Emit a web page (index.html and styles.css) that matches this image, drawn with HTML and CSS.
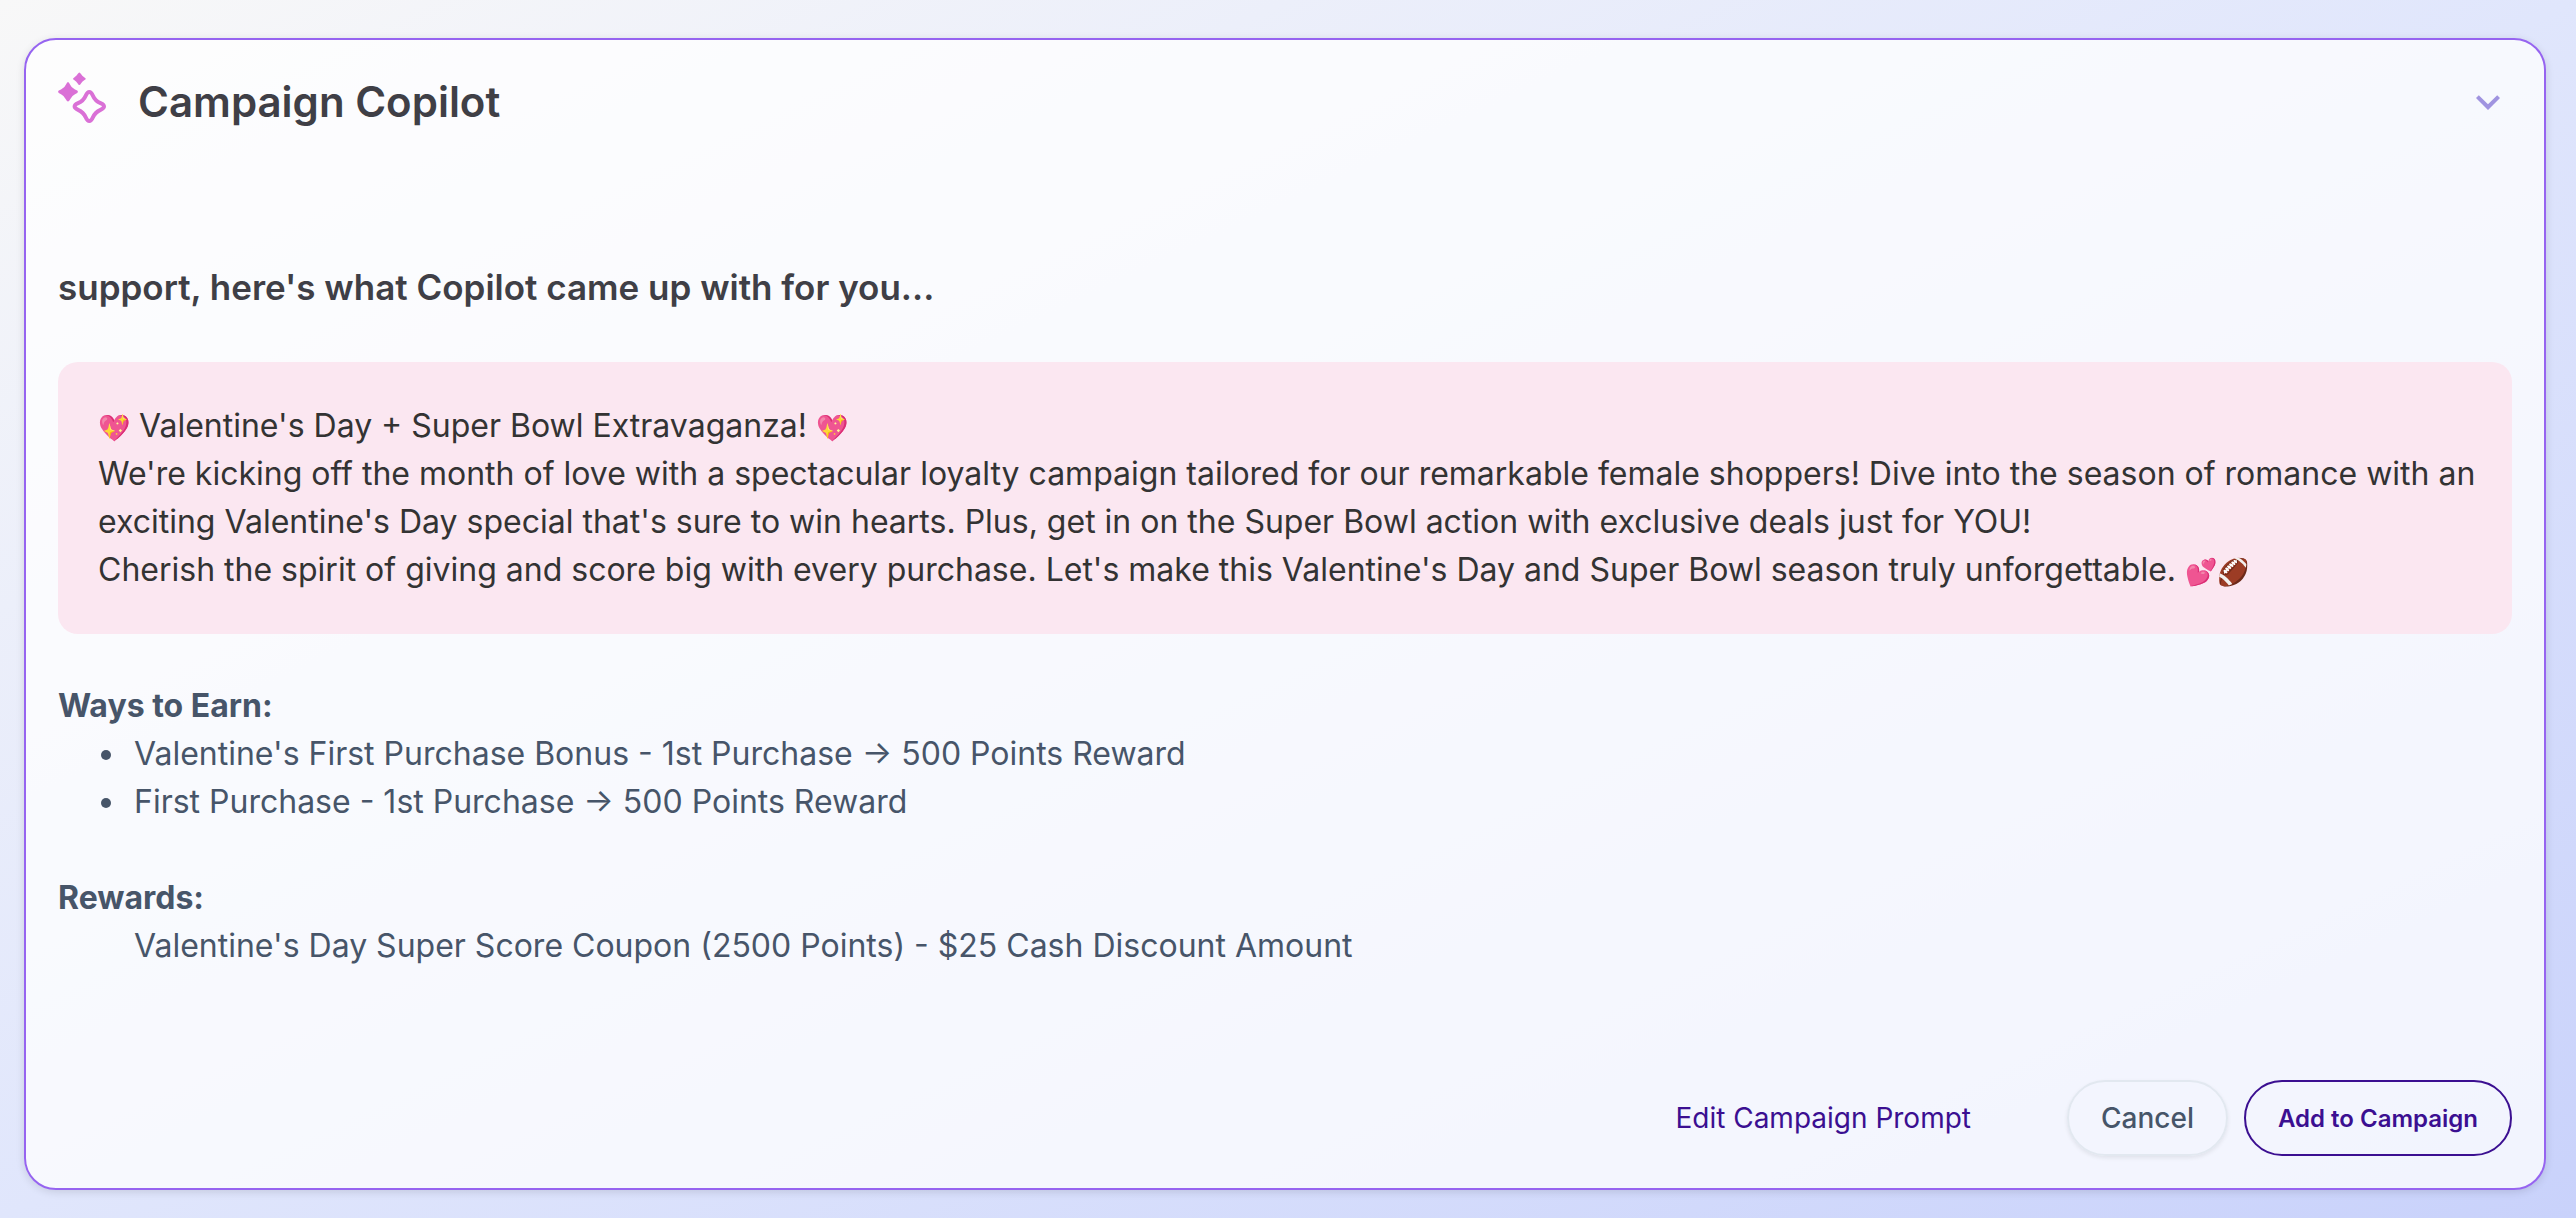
FILE: index.html
```html
<!DOCTYPE html>
<html lang="en">
<head>
<meta charset="utf-8">
<meta name="viewport" content="width=device-width, initial-scale=1">
<title>Campaign Copilot</title>
<link rel="stylesheet" href="styles.css">
</head>
<body>
<main class="card">
  <header class="card-header">
    <svg class="logo" viewBox="0 0 50 54" aria-hidden="true">
      <path class="logo-fill" d="M21.300 .5Q22 .5 23 2Q24 3.700 26.200 5.200Q27.800 6.200 27.800 6.700Q27.800 7.400 26.200 8.300Q24 9.700 23 11.500Q22 13 21.300 13Q20.600 13 19.700 11.500Q18.500 9.700 16.500 8.300Q15 7.400 15 6.700Q15 6.200 16.500 5.200Q18.500 3.700 19.700 2Q20.600 .5 21.300 .5Z"/>
      <path class="logo-fill" d="M10 10Q11 10 12 12.500Q13.300 15.800 17 17.500Q20 18.600 20 19.700Q20 20.900 17 22.200Q13.600 23.800 12.200 27.200Q11 29.500 10 29.500Q9 29.500 7.800 27.200Q6.300 23.800 3 22.200Q0 20.900 0 19.700Q0 18.600 3 17.500Q6.700 15.800 8 12.500Q9 10 10 10Z"/>
      <path class="logo-line" d="M31.300 20C33 20 33.800 21.200 34.800 23.500C36.500 27.500 38.500 29.500 42.500 31.200C44.800 32.200 46 33 46 34.500C46 36 44.800 36.800 42.500 37.800C38.500 39.500 36.500 41.500 34.800 45.500C33.800 47.800 33 49 31.300 49C29.600 49 28.800 47.800 27.800 45.500C26.100 41.500 24.100 39.500 20.100 37.800C17.800 36.800 16.600 36 16.600 34.500C16.600 33 17.800 32.200 20.100 31.200C24.100 29.500 26.100 27.500 27.800 23.500C28.800 21.200 29.600 20 31.300 20Z"/>
    </svg>
    <h1 class="title">Campaign Copilot</h1>
    <button class="toggle" type="button" aria-label="Collapse">
      <svg class="chevron" viewBox="0 0 24 24" aria-hidden="true"><path d="M7.410 8.590 12 13.170l4.590-4.580L18 10l-6 6-6-6z"/></svg>
    </button>
  </header>

  <h2 class="intro">support, here's what Copilot came up with for you...</h2>

  <section class="pitch">
    <p><span class="emoji">💖</span> Valentine's Day + Super Bowl Extravaganza! <span class="emoji">💖</span></p>
    <p>We're kicking off the month of love with a spectacular loyalty campaign tailored for our remarkable female shoppers! Dive into the season of romance with an exciting Valentine's Day special that's sure to win hearts. Plus, get in on the Super Bowl action with exclusive deals just for YOU!</p>
    <p>Cherish the spirit of giving and score big with every purchase. Let's make this Valentine's Day and Super Bowl season truly unforgettable. <span class="emoji">💕🏈</span></p>
  </section>

  <div class="details">
    <section>
      <h3>Ways to Earn:</h3>
      <ul>
        <li>Valentine's First Purchase Bonus - 1st Purchase → 500 Points Reward</li>
        <li>First Purchase - 1st Purchase → 500 Points Reward</li>
      </ul>
    </section>
    <section>
      <h3>Rewards:</h3>
      <ul class="plain">
        <li>Valentine's Day Super Score Coupon (2500 Points) - $25 Cash Discount Amount</li>
      </ul>
    </section>
  </div>

  <footer class="actions">
    <a class="edit-link" href="#">Edit Campaign Prompt</a>
    <button class="btn btn-cancel" type="button">Cancel</button>
    <button class="btn btn-add" type="button">Add to Campaign</button>
  </footer>
</main>
</body>
</html>
```

FILE: styles.css
```css
* { box-sizing: border-box; }

body, h1, h2, h3, p, ul { margin: 0; padding: 0; }

body {
  min-height: 100vh;
  padding: 38px 30px 28px 24px;
  background: linear-gradient(to bottom right, #f8f8f8, #e0e6fc 50%, #c9d2fb);
  font-family: Inter, "Liberation Sans", sans-serif;
  font-size: 32px;
  line-height: 48px;
}

.card {
  padding: 32px;
  border: 2px solid #9664f0;
  border-radius: 32px;
  background: rgba(255, 255, 255, 0.75);
  box-shadow: 0 2px 8px rgba(0, 0, 0, 0.12);
}

.card-header {
  display: flex;
  align-items: center;
  height: 60px;
}

.logo {
  width: 50px;
  height: 54px;
  margin-right: 30px;
  align-self: flex-start;
}

.logo-fill { fill: #da70d6; }
.logo-line { fill: none; stroke: #da70d6; stroke-width: 4; }

.title {
  flex: 1;
  color: #3f3f46;
  font-size: 42px;
  font-weight: 600;
  line-height: 60px;
}

.toggle {
  width: 48px;
  height: 48px;
  padding: 0;
  border: 0;
  background: none;
}

.chevron {
  display: block;
  width: 48px;
  height: 48px;
  fill: #a094e0;
}

.intro {
  margin-top: 128px;
  color: #3f3f46;
  font-size: 35px;
  font-weight: 600;
  line-height: 54px;
}

.pitch {
  margin-top: 48px;
  padding: 40px 36px 40px 40px;
  border-radius: 20px;
  background: #fbe7f1;
  color: #333;
}

.emoji {
  font-size: 26px;
  line-height: 32px;
}

.details {
  display: grid;
  gap: 48px;
  margin-top: 48px;
  color: #475569;
}

.details h3 {
  font-size: 32px;
  font-weight: 700;
}

.details ul { padding-left: 70px; }
.details li { padding-left: 6px; }
.details .plain { list-style: none; }

.actions {
  display: flex;
  justify-content: flex-end;
  align-items: center;
  gap: 16px;
  margin-top: 110px;
}

.edit-link {
  margin-right: 80px;
  color: #3b0f91;
  font-size: 28px;
  text-decoration: none;
}

.btn {
  height: 76px;
  padding: 0 32px;
  border: 2px solid #e2e8f0;
  border-radius: 38px;
  background: none;
  font-family: inherit;
  font-size: 28px;
  font-weight: 500;
}

.btn-cancel {
  color: #475569;
  box-shadow: 0 2px 4px rgba(0, 0, 0, 0.08);
}

.btn-add {
  border-color: #3b0f91;
  color: #3b0f91;
  font-size: 24px;
  font-weight: 600;
}
```
